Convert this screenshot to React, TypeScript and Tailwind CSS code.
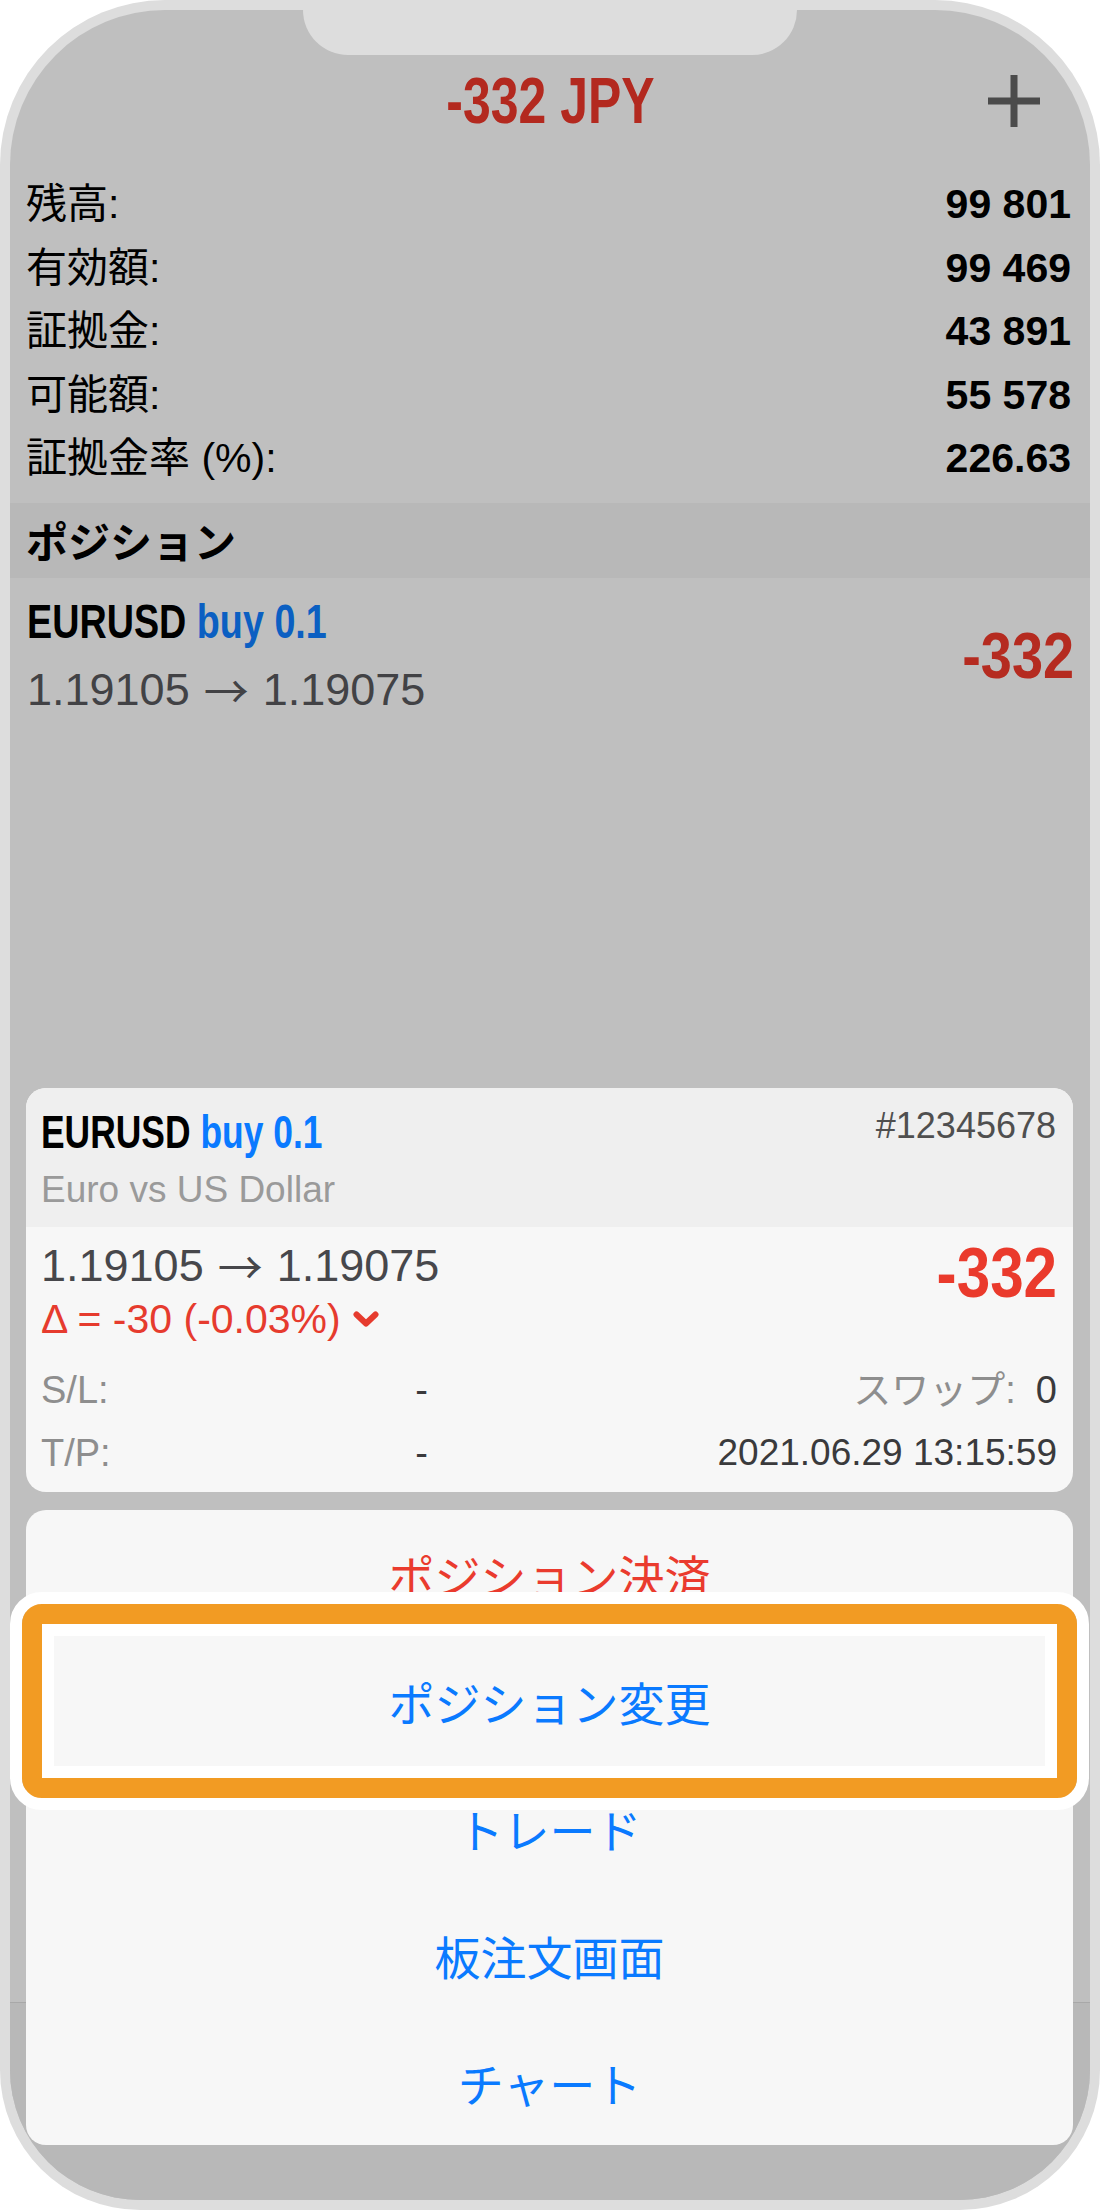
import React from "react";

const rows: [string, string][] = [
  ["残高:", "99 801"],
  ["有効額:", "99 469"],
  ["証拠金:", "43 891"],
  ["可能額:", "55 578"],
  ["証拠金率 (%):", "226.63"],
];

function Plus() {
  return (
    <svg width="52" height="52" viewBox="0 0 52 52">
      <rect x="0" y="22.5" width="52" height="7" fill="#4b4b4b" />
      <rect x="22.5" y="0" width="7" height="52" fill="#4b4b4b" />
    </svg>
  );
}

function Chevron() {
  return (
    <svg width="26" height="16" viewBox="0 0 26 16">
      <polyline points="3.5,3.5 13,12.5 22.5,3.5" fill="none" stroke="#e63b2e" strokeWidth="6" strokeLinecap="round" strokeLinejoin="round" />
    </svg>
  );
}

function Price() {
  return (
    <span className="flex items-center gap-[14px]">
      <span>1.19105</span>
      <span className="font-['Noto_Sans_CJK_JP',sans-serif]">→</span>
      <span>1.19075</span>
    </span>
  );
}

export default function App() {
  return (
    <div className="h-[2210px] w-[1100px] bg-white font-['Liberation_Sans','Noto_Sans_CJK_JP',sans-serif]">
      <div className="h-[2210px] w-[1100px] rounded-t-[165px] rounded-b-[140px] bg-[#dddddd] p-[10px]">
        <div className="relative flex h-full flex-col overflow-hidden rounded-t-[155px] rounded-b-[130px] bg-[#bfbfbf]">
          {/* notch */}
          <div className="absolute left-[293px] top-0 h-[45px] w-[494px] rounded-b-[46px] bg-[#dddddd]" />

          {/* nav bar */}
          <div className="mt-[41px] grid h-[100px] grid-cols-[1fr_auto_1fr] items-center">
            <div />
            <span className="inline-block origin-center scale-x-[0.78] text-[64px] font-bold leading-[100px] text-[#b3291f]">
              -332 JPY
            </span>
            <div className="flex justify-end pr-[50px]">
              <Plus />
            </div>
          </div>

          {/* account rows */}
          <div className="pb-[12px] pl-[16px] pr-[19px] pt-[22px]">
            {rows.map(([label, value]) => (
              <div key={label} className="flex h-[63.5px] items-center justify-between">
                <span className="text-[41px] leading-none text-black">{label}</span>
                <span className="text-[41px] font-bold leading-none text-black">{value}</span>
              </div>
            ))}
          </div>

          {/* section header */}
          <div className="flex h-[75px] items-center bg-[#b8b8b8] pl-[16px]">
            <span className="font-['Noto_Sans_CJK_JP',sans-serif] text-[42px] font-bold leading-none text-black">
              ポジション
            </span>
          </div>

          {/* position row */}
          <div className="flex justify-between pb-[12px] pl-[17px] pr-[16px] pt-[14px]">
            <div>
              <div className="flex h-[60px] items-center">
                <span className="inline-block origin-left scale-x-[0.77] whitespace-nowrap text-[49px] font-bold leading-none">
                  <span className="text-black">EURUSD</span>{" "}
                  <span className="text-[#0b5fc2]">buy 0.1</span>
                </span>
              </div>
              <div className="mt-[8px] flex h-[60px] items-center text-[45px] leading-none text-[#424245]">
                <Price />
              </div>
            </div>
            <div className="flex items-center">
              <span className="inline-block origin-right scale-x-[0.86] text-[65px] font-bold leading-none text-[#b52b20]">
                -332
              </span>
            </div>
          </div>

          <div className="flex-1" />

          {/* dimmed tab bar */}
          <div className="h-[198px] border-t border-[#a8a8a8] bg-[#b8b8b8]" />

          {/* action sheet */}
          <div className="absolute bottom-[55px] left-[16px] right-[17px] flex flex-col gap-[18px]">
            {/* info card */}
            <div className="h-[404px] overflow-hidden rounded-[20px] bg-[#f7f7f7]">
              <div className="h-[139px] bg-[#efefef] pl-[15px] pr-[17px] pt-[20px]">
                <div className="flex items-start justify-between">
                  <div className="flex h-[48px] items-center">
                    <span className="inline-block origin-left scale-x-[0.77] whitespace-nowrap text-[46px] font-bold leading-none">
                      <span className="text-black">EURUSD</span>{" "}
                      <span className="text-[#0a7aff]">buy 0.1</span>
                    </span>
                  </div>
                  <div className="flex h-[36px] items-center text-[36px] leading-none text-[#4f4f4f]">
                    #12345678
                  </div>
                </div>
                <div className="mt-[10px] flex h-[46px] items-center text-[37px] leading-none text-[#9a9a9a]">
                  Euro vs US Dollar
                </div>
              </div>
              <div className="pl-[15px] pr-[16px] pt-[14px]">
                <div className="flex justify-between">
                  <div>
                    <div className="flex h-[48px] items-center text-[45px] leading-none text-[#47474b]">
                      <Price />
                    </div>
                    <div className="mt-[8px] flex h-[44px] items-center gap-[12px] text-[41px] leading-none text-[#e63b2e]">
                      <span>Δ = -30 (-0.03%)</span>
                      <Chevron />
                    </div>
                  </div>
                  <div className="flex h-[64px] items-center">
                    <span className="inline-block origin-right scale-x-[0.86] text-[70px] font-bold leading-none text-[#ea3a2c]">
                      -332
                    </span>
                  </div>
                </div>
                <div className="mt-[17px] grid grid-cols-[387px_1fr] text-[38px] leading-none">
                  <div className="flex h-[63px] items-center justify-between">
                    <span className="text-[#8e8e8e]">S/L:</span>
                    <span className="text-[#3a3a3c]">-</span>
                  </div>
                  <div className="flex h-[63px] items-center justify-end gap-[20px]">
                    <span className="text-[#8e8e8e]">スワップ:</span>
                    <span className="text-[#3a3a3c]">0</span>
                  </div>
                  <div className="flex h-[63px] items-center justify-between">
                    <span className="text-[#8e8e8e]">T/P:</span>
                    <span className="text-[#3a3a3c]">-</span>
                  </div>
                  <div className="flex h-[63px] items-center justify-end">
                    <span className="text-[37px] text-[#3a3a3c]">2021.06.29 13:15:59</span>
                  </div>
                </div>
              </div>
            </div>

            {/* menu card */}
            <div className="flex flex-col rounded-[20px] bg-[#f7f7f7] font-['Noto_Sans_CJK_JP',sans-serif] text-[46px] leading-none">
              <div className="flex h-[127px] items-center justify-center text-[#ea3b2e]">ポジション決済</div>
              <div className="relative flex h-[127px] items-center justify-center text-[#0a7aff]">
                ポジション変更
                <div className="absolute bottom-[-46px] left-[-16px] right-[-16px] top-[-45px] rounded-[32px] border-[12px] border-white">
                  <div className="h-full rounded-[20px] border-[20px] border-[#f29b23]">
                    <div className="flex h-full items-center justify-center border-[12px] border-white bg-[#f7f7f7] text-[#0a7aff]">
                      ポジション変更
                    </div>
                  </div>
                </div>
              </div>
              <div className="flex h-[127px] items-center justify-center text-[#0a7aff]">トレード</div>
              <div className="flex h-[127px] items-center justify-center text-[#0a7aff]">板注文画面</div>
              <div className="flex h-[127px] items-center justify-center text-[#0a7aff]">チャート</div>
            </div>
          </div>
        </div>
      </div>
    </div>
  );
}
